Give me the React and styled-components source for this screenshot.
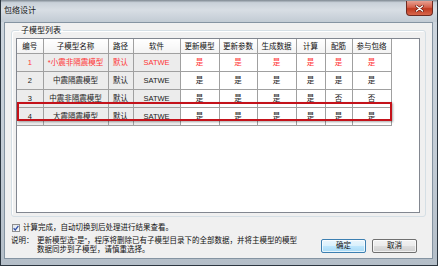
import React from "react";
import styled, { createGlobalStyle } from "styled-components";

const FONT = `"Liberation Sans", "Noto Sans CJK SC", sans-serif`;
const HEADER_H = 14;
const ROW_H = 17;

const GlobalStyle = createGlobalStyle`
  html, body { margin: 0; padding: 0; background: #1c232b; }
  body { width: 438px; height: 266px; overflow: hidden; font-family: ${FONT}; }
`;

const Window = styled.div`
  box-sizing: border-box;
  width: 438px;
  height: 266px;
  display: flex;
  flex-direction: column;
  border: 1px solid #2c3640;
  border-top: none;
  background: linear-gradient(180deg, #b8c2cc 0%, #cdd5dd 8%, #c3ccd5 60%, #b4bec8 100%);
`;

const TitleBar = styled.div`
  height: 22px;
  flex: none;
  display: flex;
  align-items: flex-start;
  padding: 0 4px 0 3px;
  background: linear-gradient(180deg, #7d8790 0%, #c9d1d9 12%, #d8dee4 45%, #c2cbd4 100%);
`;

const Title = styled.span`
  font-size: 8px;
  line-height: 8px;
  margin-top: 7px;
  color: #1a1a1a;
`;

const CloseButton = styled.div`
  margin-left: auto;
  margin-top: 1px;
  width: 27px;
  height: 15px;
  display: flex;
  align-items: center;
  justify-content: center;
  box-sizing: border-box;
  border: 1px solid #6e2a20;
  border-top: none;
  border-radius: 0 0 4px 4px;
  background: linear-gradient(180deg, #e8a091 0%, #d5604a 45%, #c0391f 55%, #d8674c 100%);
`;

const Client = styled.div`
  flex: 1;
  margin: 0 4px 6px 3px;
  box-sizing: border-box;
  border: 1px solid #8594a2;
  background: #f0f0f0;
  padding: 3px 6px 0 6px;
  display: flex;
  flex-direction: column;
`;

const Group = styled.fieldset`
  margin: 0;
  padding: 0 5px 3px 4px;
  border: 1px solid #d5dfe5;
  border-radius: 3px;
  box-shadow: inset 1px 1px 0 #fff;
`;

const Legend = styled.legend`
  font-size: 8px;
  line-height: 9px;
  padding: 0 2px;
  margin-left: 3px;
  color: #111;
`;

const ListView = styled.div`
  position: relative;
  margin-top: 3px;
  height: 175px;
  box-sizing: border-box;
  border: 1px solid #828790;
  background: #fff;
`;

const Table = styled.table`
  table-layout: fixed;
  border-collapse: collapse;
  width: 374px;
  font-size: 7.5px;
  line-height: 9px;
`;

const HeadCell = styled.th`
  height: ${HEADER_H}px;
  padding: 0;
  font-weight: normal;
  color: #111;
  border: 1px solid #a0a0a0;
  border-top: none;
  background: linear-gradient(180deg, #ffffff 0%, #f3f3f3 100%);
  white-space: nowrap;
  overflow: hidden;
  &:first-child { border-left: none; }
`;

const Cell = styled.td`
  height: ${ROW_H}px;
  padding: 0;
  text-align: center;
  white-space: nowrap;
  overflow: hidden;
  border: 1px solid #a0a0a0;
  background: ${p => (p.$shaded ? "#ececec" : "#ffffff")};
  color: ${p => (p.$hot ? "#ff3434" : "#1a1a1a")};
  &:first-child { border-left: none; }
`;

const Highlight = styled.div`
  position: absolute;
  left: 0;
  top: ${p => p.$top}px;
  width: 375px;
  height: 19px;
  box-sizing: border-box;
  border: 2px solid #c4121a;
  box-shadow: 1px 1px 2px rgba(0, 0, 0, 0.35);
  pointer-events: none;
`;

const CheckRow = styled.label`
  display: flex;
  align-items: center;
  gap: 3px;
  margin-top: 6px;
  margin-left: 1px;
  font-size: 7.5px;
  line-height: 9px;
  color: #111;
`;

const CheckBox = styled.span`
  width: 8px;
  height: 8px;
  box-sizing: border-box;
  border: 1px solid #8e8f8f;
  background: linear-gradient(135deg, #dfe4ea 0%, #fdfdfd 100%);
  display: flex;
  align-items: center;
  justify-content: center;
`;

const Footer = styled.div`
  display: flex;
  align-items: flex-start;
  margin-top: 4px;
`;

const NoteLabel = styled.span`
  flex: none;
  width: 26px;
  font-size: 7.5px;
  line-height: 9px;
  color: #111;
`;

const NoteText = styled.p`
  margin: 0;
  font-size: 7.5px;
  line-height: 9px;
  white-space: nowrap;
  color: #111;
`;

const Buttons = styled.div`
  display: flex;
  gap: 6px;
  margin-left: auto;
  margin-top: 3px;
  margin-right: 9px;
`;

const Button = styled.button`
  width: 45px;
  height: 14px;
  padding: 0;
  font-family: ${FONT};
  font-size: 7.5px;
  line-height: 12px;
  color: #111;
  border-radius: 2px;
  border: 1px solid ${p => (p.$primary ? "#3c7fb1" : "#707070")};
  background: ${p =>
    p.$primary
      ? "linear-gradient(180deg, #eaf6fd 0%, #d9f0fc 50%, #bee6fd 51%, #a7d9f5 100%)"
      : "linear-gradient(180deg, #f2f2f2 0%, #ebebeb 50%, #dddddd 51%, #cfcfcf 100%)"};
  box-shadow: inset 0 0 0 1px rgba(255, 255, 255, 0.7);
`;

const columns = [
  { title: "编号", w: 26 },
  { title: "子模型名称", w: 65 },
  { title: "路径", w: 25 },
  { title: "软件", w: 47 },
  { title: "更新模型", w: 39 },
  { title: "更新参数", w: 38 },
  { title: "生成数据", w: 39 },
  { title: "计算", w: 29 },
  { title: "配筋", w: 27 },
  { title: "参与包络", w: 39 },
];

const allYes = ["是", "是", "是", "是", "是", "是"];

const rows = [
  { id: 1, name: "*小震非隔震模型", flags: allYes, hot: true },
  { id: 2, name: "中震隔震模型", flags: allYes },
  { id: 3, name: "中震非隔震模型", flags: ["是", "是", "是", "是", "否", "否"] },
  { id: 4, name: "大震隔震模型", flags: allYes, marked: true },
];

const markedIndex = rows.findIndex(r => r.marked);

export default function App() {
  return (
    <>
      <GlobalStyle />
      <Window>
        <TitleBar>
          <Title>包络设计</Title>
          <CloseButton>
            <svg width="9" height="7" viewBox="0 0 9 7">
              <path d="M1.5 1 L7.5 6 M7.5 1 L1.5 6" stroke="#5a1208" strokeWidth="2.6" strokeLinecap="round" />
              <path d="M1.5 1 L7.5 6 M7.5 1 L1.5 6" stroke="#ffffff" strokeWidth="1.5" strokeLinecap="round" />
            </svg>
          </CloseButton>
        </TitleBar>
        <Client>
          <Group>
            <Legend>子模型列表</Legend>
            <ListView>
              <Table>
                <colgroup>
                  {columns.map(c => <col key={c.title} style={{ width: c.w }} />)}
                </colgroup>
                <thead>
                  <tr>
                    {columns.map(c => <HeadCell key={c.title}>{c.title}</HeadCell>)}
                  </tr>
                </thead>
                <tbody>
                  {rows.map(r => (
                    <tr key={r.id}>
                      <Cell $shaded $hot={r.hot}>{r.id}</Cell>
                      <Cell $shaded $hot={r.hot}>{r.name}</Cell>
                      <Cell $shaded $hot={r.hot}>默认</Cell>
                      <Cell $shaded $hot={r.hot}>SATWE</Cell>
                      {r.flags.map((f, i) => <Cell key={i} $hot={r.hot}>{f}</Cell>)}
                    </tr>
                  ))}
                </tbody>
              </Table>
              {markedIndex >= 0 && <Highlight $top={HEADER_H + markedIndex * ROW_H - 2} />}
            </ListView>
          </Group>
          <CheckRow>
            <CheckBox>
              <svg width="6" height="6" viewBox="0 0 6 6">
                <path d="M0.6 3.2 L2.3 4.9 L5.4 0.8" fill="none" stroke="#3352a6" strokeWidth="1.3" />
              </svg>
            </CheckBox>
            计算完成，自动切换到后处理进行结果查看。
          </CheckRow>
          <Footer>
            <NoteLabel>说明：</NoteLabel>
            <NoteText>
              更新模型选“是”，程序将删除已有子模型目录下的全部数据，并将主模型的模型
              <br />
              数据同步到子模型，请慎重选择。
            </NoteText>
            <Buttons>
              <Button $primary>确定</Button>
              <Button>取消</Button>
            </Buttons>
          </Footer>
        </Client>
      </Window>
    </>
  );
}
